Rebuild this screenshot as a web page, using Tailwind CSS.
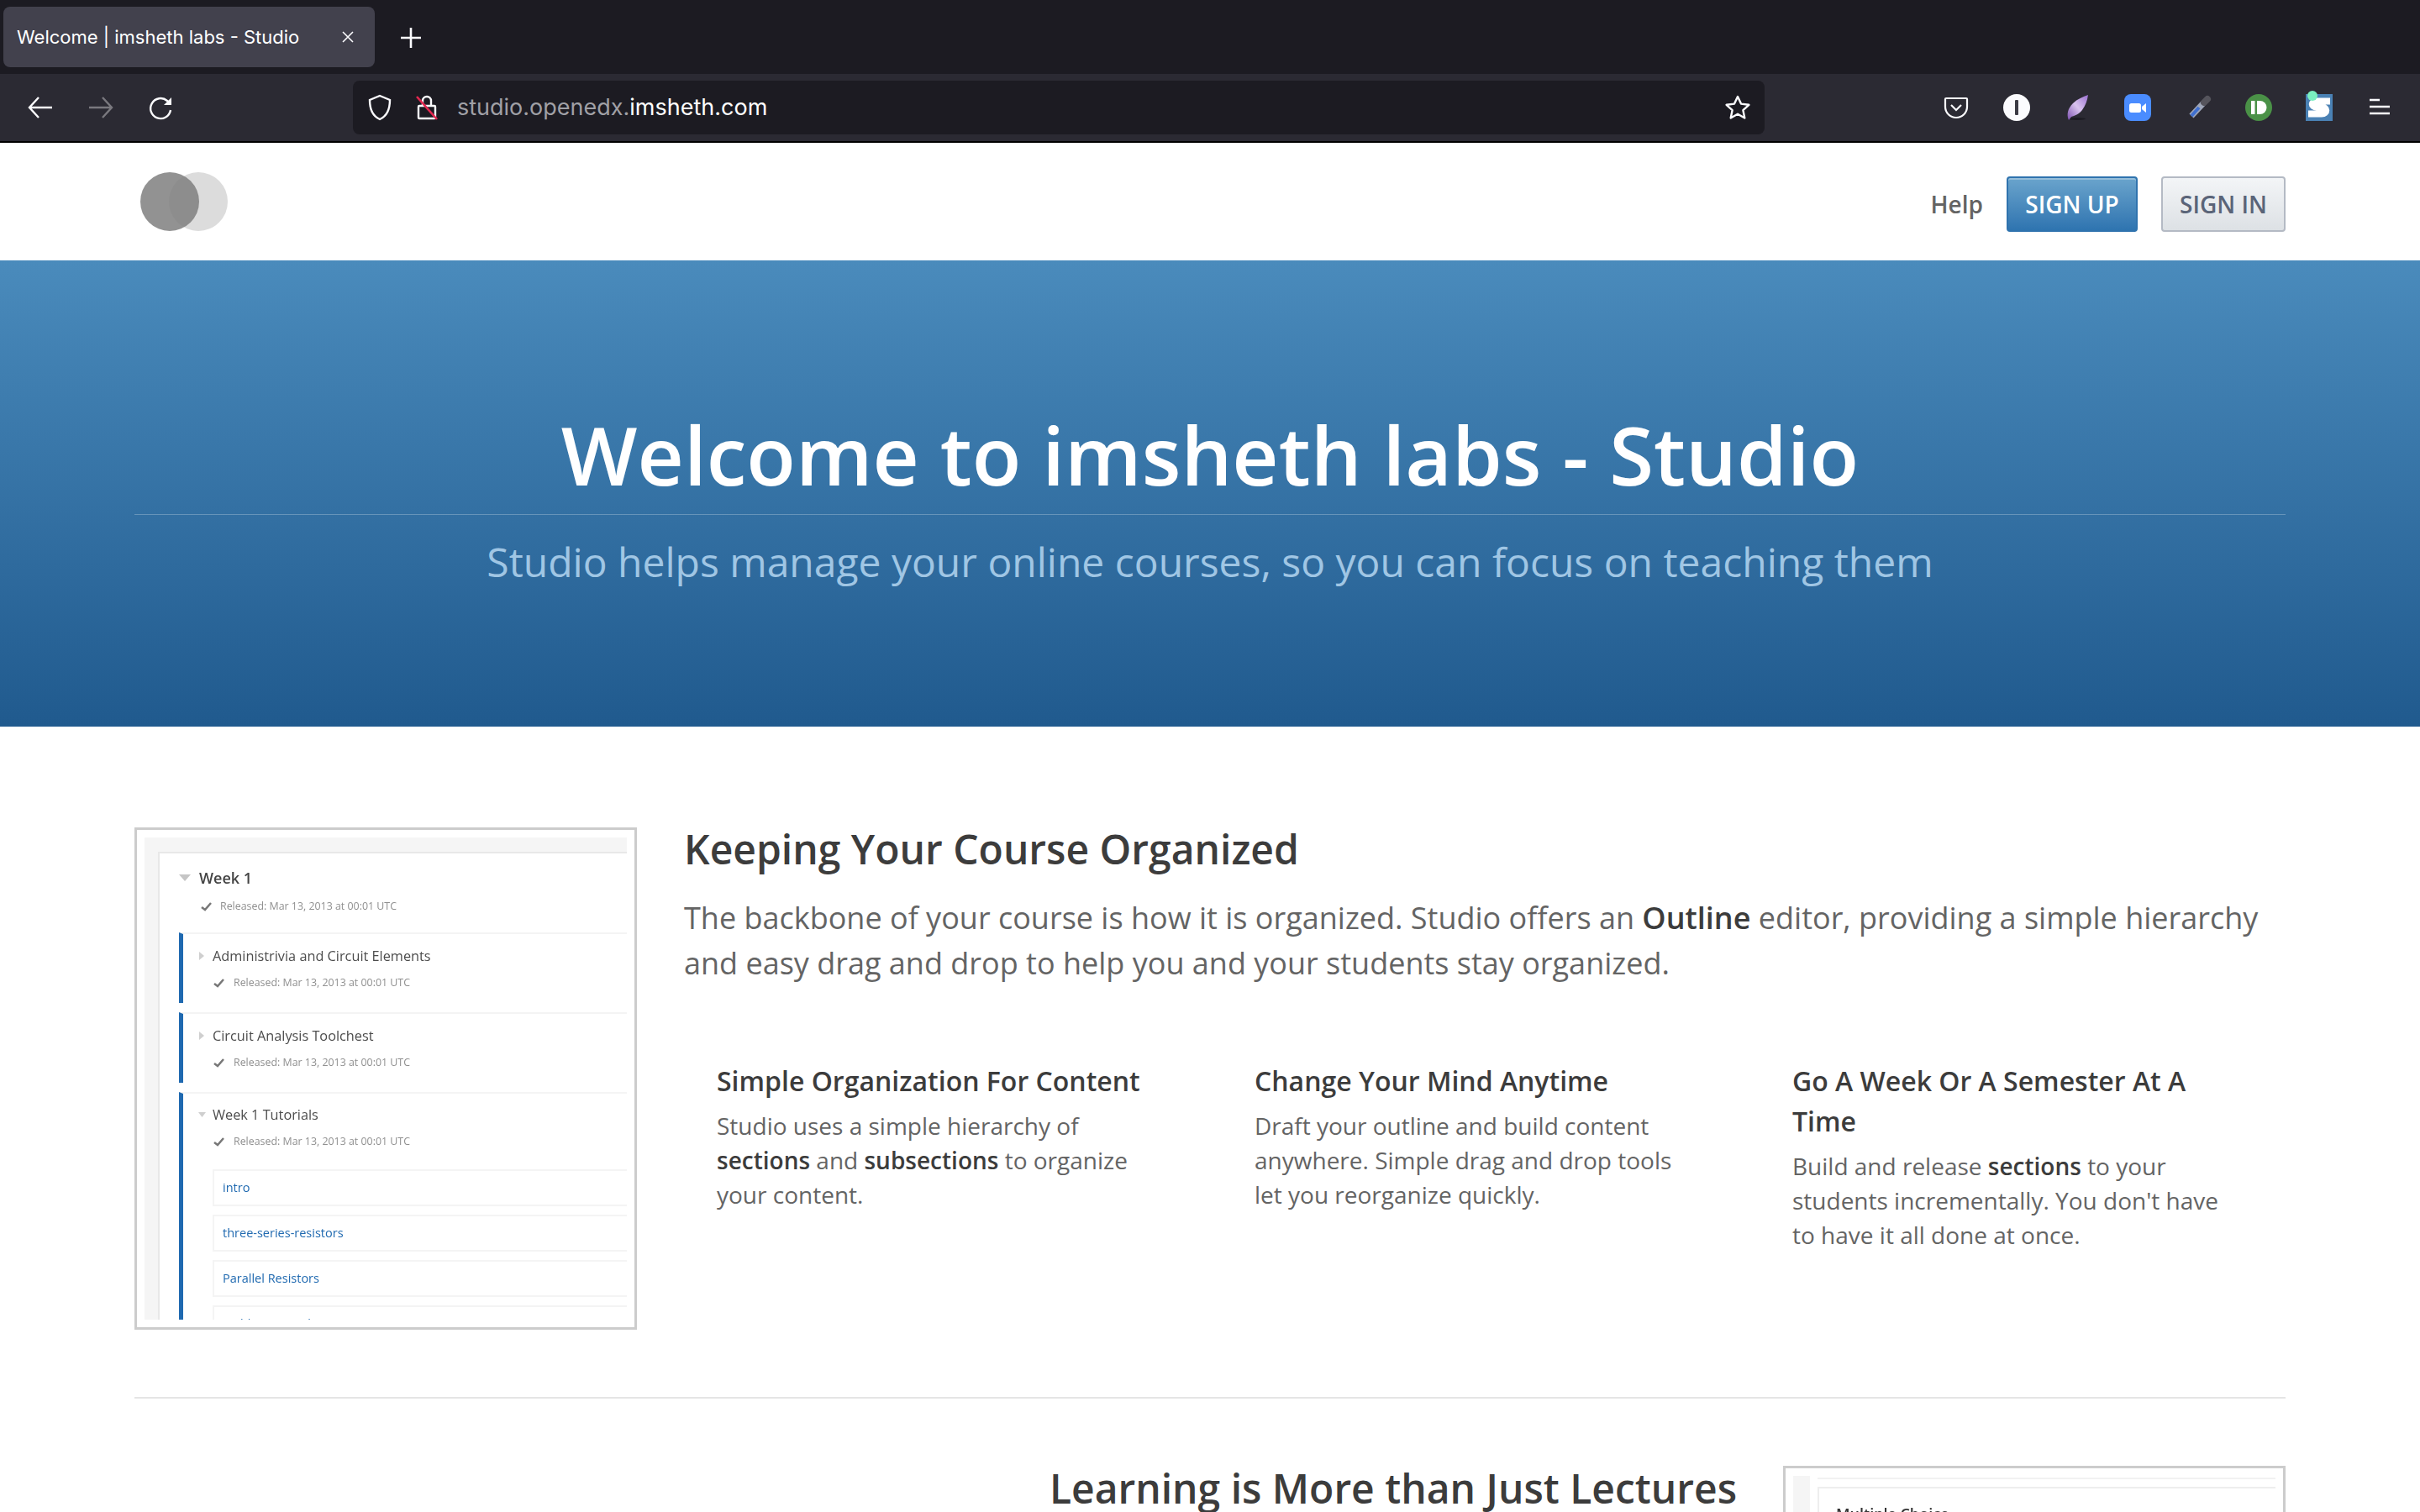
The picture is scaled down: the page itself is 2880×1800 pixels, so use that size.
<!DOCTYPE html>
<html>
  <head>
    <title>Welcome | imsheth labs - Studio</title>
    <script src="https://cdn.jsdelivr.net/npm/@tailwindcss/browser@4"></script>
  </head>
  <body class="bg-white">
    <div class="w-[2880px] h-[1800px] overflow-hidden font-['Open_Sans',sans-serif] text-[#3c3c3c]">
      <!-- tab strip -->
      <div class="h-[88px] bg-[#1c1b22] flex items-start pt-2 pl-1 font-['Inter',sans-serif]">
        <div class="w-[442px] h-[72px] rounded-lg bg-[#42414d] flex items-center pl-4 pr-6 justify-between text-white text-[22px]">
          <span>Welcome | imsheth labs - Studio</span>
          <svg class="w-4 h-4" viewBox="0 0 16 16" stroke="#fbfbfe" stroke-width="1.6" fill="none"><path d="M2 2l12 12M14 2L2 14" /></svg>
        </div>
        <svg class="w-7 h-7 ml-[29px] mt-[23px]" viewBox="0 0 28 28" stroke="#fbfbfe" stroke-width="2.6" fill="none"><path d="M14 2v24M2 14h24" /></svg>
      </div>

      <!-- toolbar -->
      <div class="h-[82px] bg-[#2b2a33] border-b-2 border-black flex items-start font-['Inter',sans-serif]">
        <div class="w-[420px] h-20 flex items-center pl-8 gap-10">
          <svg class="w-8 h-8" viewBox="0 0 32 32" stroke="#fbfbfe" stroke-width="2.4" fill="none"><path d="M30 16H3M14 4L3 16l11 12" /></svg>
          <svg class="w-8 h-8" viewBox="0 0 32 32" stroke="#7a797f" stroke-width="2.4" fill="none"><path d="M2 16h27M18 4l11 12-11 12" /></svg>
          <svg class="w-8 h-8 mt-[2px]" viewBox="0 0 32 32" stroke="#fbfbfe" stroke-width="2.4" fill="none"><path d="M27 18a12 12 0 1 1-4-11l4 4" /><path d="M28 3v9h-9" fill="#fbfbfe" stroke="none" /></svg>
        </div>
        <div class="w-[1680px] h-16 mt-2 rounded-lg bg-[#1c1b22] flex items-center pl-4 pr-4">
          <svg class="w-8 h-8" viewBox="0 0 32 32" stroke="#fbfbfe" stroke-width="2.4" fill="none"><path d="M16 2l12 5c0 11-3 19-12 23C7 26 4 18 4 7z" /></svg>
          <svg class="w-8 h-8 ml-6" viewBox="0 0 32 32" fill="none"><path d="M11 14V8a5 5 0 0 1 10 0v6M7 14h18a1 1 0 0 1 1 1v13a1 1 0 0 1-1 1H7a1 1 0 0 1-1-1V15a1 1 0 0 1 1-1z" stroke="#fbfbfe" stroke-width="2.4" /><path d="M4 3l24 27" stroke="#e22850" stroke-width="2.6" /></svg>
          <div class="ml-[20px] text-[27px] text-[#a0a0a6]">studio.openedx.<span class="text-white">imsheth.com</span></div>
          <svg class="w-8 h-8 ml-auto" viewBox="0 0 32 32" stroke="#fbfbfe" stroke-width="2.4" fill="none" stroke-linejoin="round"><path d="M16 3l4 8.600 9.400 1.200-7 6.400 1.900 9.300-8.300-4.700-8.300 4.700 1.900-9.300-7-6.400 9.400-1.200z" /></svg>
        </div>
        <!-- extensions -->
        <div class="relative flex-1 h-20 flex items-center pl-[212px] gap-10">
          <svg class="w-8 h-8 shrink-0" viewBox="0 0 32 32" fill="none" stroke="#fbfbfe" stroke-width="2.200"><path d="M4 5h24a1 1 0 0 1 1 1v9a13 13 0 0 1-26 0V6a1 1 0 0 1 1-1z" /><path d="M10 13l6 6 6-6" /></svg>
          <svg class="w-8 h-8 shrink-0" viewBox="0 0 32 32"><circle cx="16" cy="16" r="16" fill="#fbfbfe" /><rect x="14" y="7" width="4" height="18" rx="1" fill="#3c3b45" /></svg>
          <svg class="w-8 h-8 shrink-0" viewBox="0 0 32 32">
            <defs><linearGradient id="feather" x1="0" y1="1" x2="1" y2="0"><stop offset="0" stop-color="#7c4fb0" /><stop offset="0.5" stop-color="#d9c4ee" /><stop offset="1" stop-color="#9a6fd0" /></linearGradient></defs>
            <ellipse cx="16" cy="29.500" rx="10" ry="1.500" fill="#1c1b22" />
            <path d="M29 1C28 8 26 13 22 19c-4 5-9 7-13 8l-3 4C3 24 5 17 11 11 16 6 23 3 29 1z" fill="url(#feather)" />
          </svg>
          <svg class="w-8 h-8 shrink-0" viewBox="0 0 32 32"><rect width="32" height="32" rx="8" fill="#4a8cff" /><rect x="6" y="11" width="14" height="11" rx="2.500" fill="#fff" /><path d="M21 15l5-4v11l-5-4z" fill="#fff" /></svg>
          <svg class="w-8 h-8 shrink-0" viewBox="0 0 32 32" fill="none"><path d="M8 26L22 11" stroke="#9ea6b8" stroke-width="7" /><path d="M8 26l9-10" stroke="#3f6fd0" stroke-width="4" /><path d="M23 10l4-4" stroke="#55545c" stroke-width="8" stroke-linecap="round" /></svg>
          <svg class="w-8 h-8 shrink-0" viewBox="0 0 32 32"><circle cx="16" cy="16" r="16" fill="#4a9147" /><rect x="7" y="8" width="4.500" height="16" rx="0.500" fill="#fff" /><path d="M14 8h3.500a8 8 0 0 1 0 16H14z" fill="#fff" /></svg>
          <svg class="w-8 h-8 shrink-0" viewBox="0 0 32 32" fill="none"><rect width="32" height="32" fill="#4a81b4" /><path d="M29 8.500H13c-7 0-7 7 0 7h6c7 0 7 8 0 8H3" stroke="#fff" stroke-width="8" /></svg>
          <svg class="w-8 h-8 shrink-0" viewBox="0 0 32 32" stroke="#fbfbfe" stroke-width="2.400"><path d="M4 7h12M4 15h24M4 23h24" /></svg>
          <div class="absolute left-[646px] top-[20px] w-3 h-3 rounded-full bg-[#7af0c0]"></div>
        </div>
      </div>

      <!-- studio header -->
      <header class="h-[140px] px-[160px] flex items-center justify-between">
        <svg class="w-[108px] h-[72px] ml-[6px]" viewBox="0 0 108 72"><circle cx="70" cy="36" r="35" fill="#dcdcdc" /><circle cx="36" cy="36" r="35" fill="#7f7f7f" fill-opacity="0.85" /></svg>
        <div class="flex items-center font-semibold text-[28px] mt-[5px]">
          <span class="text-[#646464] mr-[28px]">Help</span>
          <div class="w-[156px] h-[66px] rounded border-2 border-[#2f73ae] bg-linear-to-b from-[#6aa4cc] to-[#2e74b0] text-white flex items-center justify-center shadow-[inset_0_2px_0_rgba(255,255,255,0.3)]">SIGN UP</div>
          <div class="w-[148px] h-[66px] ml-[28px] rounded border-2 border-[#b4bac4] bg-linear-to-b from-[#f3f5f7] to-[#dde1e5] text-[#5a6478] flex items-center justify-center">SIGN IN</div>
        </div>
      </header>

      <!-- hero -->
      <section class="h-[555px] bg-linear-to-b from-[#4a8bbc] to-[#205a8e] px-[160px] text-center pt-[178px]">
        <h1 class="text-[96px] leading-[106px] pb-[18px] font-semibold text-white border-b border-white/25">Welcome to imsheth labs - Studio</h1>
        <p class="text-[48px] leading-[72px] mt-[20px] font-normal text-[#a0c6e4]">Studio helps manage your online courses, so you can focus on teaching them</p>
      </section>

      <!-- main -->
      <main class="px-[160px] pt-[120px]">
        <section class="flex gap-[56px] h-[680px] border-b-2 border-[#e5e5e5]">
          <div class="w-[598px] h-[598px] shrink-0 border-[3px] border-[#cccccc] p-[9px] blur-[0.5px]">
            <div class="h-full bg-[#f5f5f5] pl-[16px] pt-[17px] overflow-hidden">
              <div class="h-full bg-white border-t-2 border-l-2 border-[#e8e8e8] pl-[23px] pt-[16px]">
                <div class="flex items-center gap-[10px] text-[18px] font-semibold text-[#444] leading-[26px]">
                  <svg class="w-[14px] h-2" viewBox="0 0 14 8" fill="#c5c5c5"><path d="M0 0h14L7 8z" /></svg>Week 1
                </div>
                <div class="flex items-center gap-[10px] ml-[26px] mt-[9px] h-6 text-[12.400px] text-[#8f8f8f]">
                  <svg class="w-[13px] h-[11px]" viewBox="0 0 13 11" fill="none" stroke="#777" stroke-width="2.500"><path d="M1 6l4 3 7-8" /></svg>Released: Mar 13, 2013 at 00:01 UTC
                </div>

                <div class="mt-[19px] h-[84px] border-l-[5px] border-[#1f69b0] border-t-2 border-t-[#f4f4f4] pl-[20px] pt-[14px]">
                  <div class="flex items-center gap-[10px] -ml-[1px] text-[16.300px] text-[#4c4c4c] leading-6"><svg class="w-[6px] h-[10px]" viewBox="0 0 6 10" fill="#cfcfcf"><path d="M0 0l6 5-6 5z" /></svg>Administrivia and Circuit Elements</div>
                  <div class="flex items-center gap-[11px] ml-[16px] mt-[8px] text-[12.400px] text-[#8f8f8f] h-6"><svg class="w-[13px] h-[11px]" viewBox="0 0 13 11" fill="none" stroke="#777" stroke-width="2.500"><path d="M1 6l4 3 7-8" /></svg>Released: Mar 13, 2013 at 00:01 UTC</div>
                </div>
                <div class="mt-[11px] h-[84px] border-l-[5px] border-[#1f69b0] border-t-2 border-t-[#f4f4f4] pl-[20px] pt-[14px]">
                  <div class="flex items-center gap-[10px] -ml-[1px] text-[16.300px] text-[#4c4c4c] leading-6"><svg class="w-[6px] h-[10px]" viewBox="0 0 6 10" fill="#cfcfcf"><path d="M0 0l6 5-6 5z" /></svg>Circuit Analysis Toolchest</div>
                  <div class="flex items-center gap-[11px] ml-[16px] mt-[8px] text-[12.400px] text-[#8f8f8f] h-6"><svg class="w-[13px] h-[11px]" viewBox="0 0 13 11" fill="none" stroke="#777" stroke-width="2.500"><path d="M1 6l4 3 7-8" /></svg>Released: Mar 13, 2013 at 00:01 UTC</div>
                </div>
                <div class="mt-[11px] h-[290px] border-l-[5px] border-[#1f69b0] border-t-2 border-t-[#f4f4f4] pl-[20px] pt-[13px]">
                  <div class="flex items-center gap-[8px] -ml-[2px] text-[16.300px] text-[#4c4c4c] leading-6"><svg class="w-[9px] h-[6px]" viewBox="0 0 9 6" fill="#cfcfcf"><path d="M0 0h9L4.500 6z" /></svg>Week 1 Tutorials</div>
                  <div class="flex items-center gap-[11px] ml-[16px] mt-[8px] text-[12.400px] text-[#8f8f8f] h-6"><svg class="w-[13px] h-[11px]" viewBox="0 0 13 11" fill="none" stroke="#777" stroke-width="2.500"><path d="M1 6l4 3 7-8" /></svg>Released: Mar 13, 2013 at 00:01 UTC</div>
                  <div class="mt-[21px] ml-[15px] flex flex-col gap-[10px] text-[14.500px] text-[#1f69b0]">
                    <div class="h-[44px] shrink-0 border-2 border-r-0 border-[#f4f4f4] pl-[10px] flex items-center">intro</div>
                    <div class="h-[44px] shrink-0 border-2 border-r-0 border-[#f4f4f4] pl-[10px] flex items-center">three-series-resistors</div>
                    <div class="h-[44px] shrink-0 border-2 border-r-0 border-[#f4f4f4] pl-[10px] flex items-center">Parallel Resistors</div>
                    <div class="h-[44px] shrink-0 border-2 border-r-0 border-[#f4f4f4] pl-[10px] flex items-center">Ladder Network</div>
                  </div>
                </div>
              </div>
            </div>
          </div>

          <div class="flex-1 min-w-0">
            <h2 class="text-[48px] leading-[54px] font-semibold text-[#3c3c3c] -mt-[1px]">Keeping Your Course Organized</h2>
            <p class="mt-[28px] text-[36px] leading-[54px] text-[#646464]">The backbone of your course is how it is organized. Studio offers an <strong class="font-semibold text-[#3c3c3c]">Outline</strong> editor, providing a simple hierarchy and easy drag and drop to help you and your students stay organized.</p>
            <div class="mt-[89px] grid grid-cols-[640px_640px_640px] pl-[39px]">
              <div class="pr-[120px]">
                <h3 class="text-[32px] leading-[48px] font-semibold">Simple Organization For Content</h3>
                <p class="mt-[9px] text-[28px] leading-[41px] text-[#646464]">Studio uses a simple hierarchy of <strong class="font-semibold text-[#3c3c3c]">sections</strong> and <strong class="font-semibold text-[#3c3c3c]">subsections</strong> to organize your content.</p>
              </div>
              <div class="pr-[120px]">
                <h3 class="text-[32px] leading-[48px] font-semibold">Change Your Mind Anytime</h3>
                <p class="mt-[9px] text-[28px] leading-[41px] text-[#646464]">Draft your outline and build content anywhere. Simple drag and drop tools let you reorganize quickly.</p>
              </div>
              <div class="pr-[120px]">
                <h3 class="text-[32px] leading-[48px] font-semibold">Go A Week Or A Semester At A Time</h3>
                <p class="mt-[9px] text-[28px] leading-[41px] text-[#646464]">Build and release <strong class="font-semibold text-[#3c3c3c]">sections</strong> to your students incrementally. You don't have to have it all done at once.</p>
              </div>
            </div>
          </div>
        </section>

        <section class="flex justify-end gap-[55px] pt-[80px]">
          <h2 class="text-[48px] leading-[54px] font-semibold text-[#3c3c3c]">Learning is More than Just Lectures</h2>
          <div class="w-[598px] h-[598px] shrink-0 border-[3px] border-[#cccccc] p-[9px] blur-[0.5px] flex">
            <div class="w-[20px] bg-[#f5f5f5]"></div>
            <div class="flex-1 pl-[9px]">
              <div class="h-[2px] mt-[2px] bg-[#f2f2f2]"></div>
              <div class="h-full mt-[9px] border-t-2 border-l-2 border-[#eeeeee] pl-[20px] pt-[17px] text-[18px] font-semibold text-[#333]">Multiple Choice</div>
            </div>
          </div>
        </section>
      </main>
    </div>
  </body>
</html>
